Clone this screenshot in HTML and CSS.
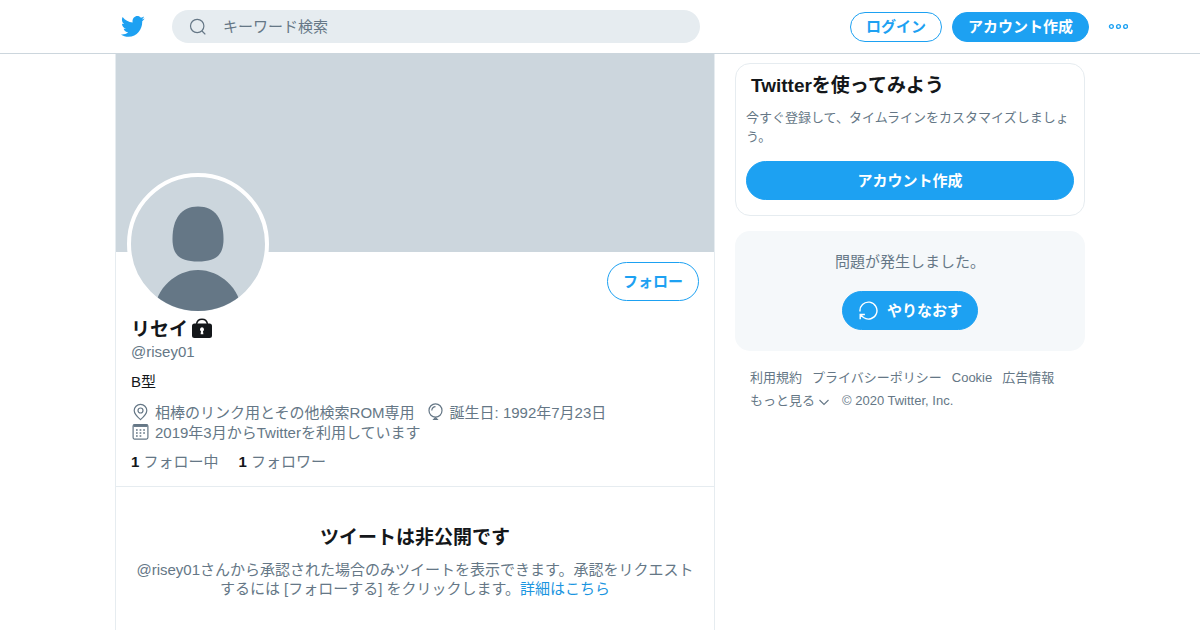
FILE: index.html
```html
<!DOCTYPE html>
<html lang="ja">
<head>
    <meta charset="UTF-8">
    <meta name="viewport" content="width=device-width, initial-scale=1.0">
    <title>リセイ (@risey01) / Twitter</title>
    <link rel="stylesheet" href="styles.css">
</head>
<body>
    <header class="topbar">
        <a class="logo" href="#">
            <svg viewBox="0 0 24 24" preserveAspectRatio="none"><path d="M23.643 4.937c-.835.37-1.732.62-2.675.733.962-.576 1.7-1.49 2.048-2.578-.9.534-1.897.922-2.958 1.13-.85-.904-2.06-1.47-3.4-1.47-2.572 0-4.658 2.086-4.658 4.66 0 .364.042.718.12 1.06-3.873-.195-7.304-2.05-9.602-4.868-.4.69-.63 1.49-.63 2.342 0 1.616.823 3.043 2.072 3.878-.764-.025-1.482-.234-2.11-.583v.06c0 2.257 1.605 4.14 3.737 4.568-.392.106-.803.162-1.227.162-.3 0-.593-.028-.877-.082.593 1.85 2.313 3.198 4.352 3.234-1.595 1.25-3.604 1.995-5.786 1.995-.376 0-.747-.022-1.112-.065 2.062 1.323 4.51 2.093 7.14 2.093 8.57 0 13.255-7.098 13.255-13.254 0-.2-.005-.402-.014-.602.91-.658 1.7-1.477 2.323-2.41z"/></svg>
        </a>
        <div class="search">
            <svg class="line" viewBox="0 0 20 20"><circle cx="9.2" cy="9" r="6.7"/><path d="M14 14l3.3 3.4"/></svg>
            <span>キーワード検索</span>
        </div>
        <nav class="account">
            <a class="btn outline" href="#">ログイン</a>
            <a class="btn fill" href="#">アカウント作成</a>
            <svg class="dots" viewBox="0 0 20 8"><circle cx="3.4" cy="3.5" r="1.9"/><circle cx="10.5" cy="3.5" r="1.9"/><circle cx="17.6" cy="3.5" r="1.9"/></svg>
        </nav>
    </header>

    <div class="layout">
        <main class="profile">
            <div class="banner"></div>
            <div class="info">
                <div class="actions">
                    <div class="avatar">
                        <svg viewBox="0 0 134 134"><path d="M67 29.5C84 29.5 92.5 42 92.5 62C92.5 79 84 84.5 67 84.5C50 84.5 41.5 79 41.5 62C41.5 42 50 29.5 67 29.5z"/><path d="M24 134C24 112 45 93 67 93S110 112 110 134z"/></svg>
                    </div>
                    <a class="btn outline big" href="#">フォロー</a>
                </div>
                <h1>リセイ<svg class="lock" viewBox="0 0 20 21"><path d="M4.5 7a5.6 6 0 0 1 11 0" fill="none" stroke="#14171a" stroke-width="1.5"/><path fill-rule="evenodd" d="M2.5 6.5h15A2.5 2.5 0 0 1 20 9v9.5a2.5 2.5 0 0 1-2.5 2.5h-15A2.5 2.5 0 0 1 0 18.5V9a2.5 2.5 0 0 1 2.5-2.5zM10 10.3a2.1 2.1 0 0 0-1 3.9l-.4 3h2.8l-.4-3a2.1 2.1 0 0 0-1-3.9z"/></svg></h1>
                <div class="handle">@risey01</div>
                <p class="bio">B型</p>
                <div class="meta">
                    <span><svg class="line" viewBox="0 0 20 20"><path d="M9.5 17.6C7.3 15.8 3.2 12.3 3.2 8.6a6.3 6.2 0 0 1 12.6 0C15.8 12.3 11.7 15.8 9.5 17.6z"/><circle cx="9.5" cy="8.5" r="2.5"/></svg>相棒のリンク用とその他検索ROM専用</span>
                    <span><svg class="line" viewBox="0 0 20 20"><ellipse cx="9.5" cy="8.5" rx="6.5" ry="6.7"/><path d="M5.8 8.5A3.7 3.9 0 0 1 9.5 4.6M7.8 17.3L9.5 15.5l1.7 1.8z"/></svg>誕生日: 1992年7月23日</span>
                    <span><svg class="line" viewBox="0 0 20 20"><rect x="2.1" y="2.5" width="14.8" height="14.6" rx="1.5"/><path stroke-width="2.5" d="M2.5 3.7h14"/><path class="days" d="M5 8h10M5 11h10M5 14h6"/></svg>2019年3月からTwitterを利用しています</span>
                </div>
                <div class="counts"><span><b>1</b> フォロー中</span><span><b>1</b> フォロワー</span></div>
            </div>
            <section class="protected">
                <h2>ツイートは非公開です</h2>
                <p>@risey01さんから承認された場合のみツイートを表示できます。承認をリクエストするには [フォローする] をクリックします。<a href="#">詳細はこちら</a></p>
            </section>
        </main>

        <aside class="sidebar">
            <section class="signup">
                <h2>Twitterを使ってみよう</h2>
                <p>今すぐ登録して、タイムラインをカスタマイズしましょう。</p>
                <a class="btn fill big" href="#">アカウント作成</a>
            </section>
            <section class="error">
                <p>問題が発生しました。</p>
                <a class="btn fill big" href="#"><svg viewBox="0 0 20 20"><path d="M2 10.500A8.500 8.500 0 1 1 5.500 16.500L2.500 13.800M2.200 18.200V13.500h4.700"/></svg>やりなおす</a>
            </section>
            <footer>
                <a href="#">利用規約</a>
                <a href="#">プライバシーポリシー</a>
                <a href="#">Cookie</a>
                <a href="#">広告情報</a>
                <a href="#">もっと見る<svg viewBox="0 0 12 12"><path d="M1.5 4L6 8.5 10.5 4"/></svg></a>
                <span>© 2020 Twitter, Inc.</span>
            </footer>
        </aside>
    </div>
</body>
</html>
```
FILE: styles.css
```css
* {
    box-sizing: border-box;
}
body {
    margin: 0;
    height: 630px;
    overflow: hidden;
    background-color: #fff;
    color: #14171a;
    font-family: "Liberation Sans", "Noto Sans CJK JP", sans-serif;
    font-size: 15px;
    line-height: 20px;
}
h1, h2, p {
    margin: 0;
}
h1, h2 {
    font-size: 19px;
    line-height: 25px;
}
a {
    color: inherit;
    text-decoration: none;
}
svg {
    display: block;
    flex-shrink: 0;
}
.line {
    width: 20px;
    height: 20px;
    fill: none;
    stroke: #657786;
    stroke-width: 1.2;
}
.topbar {
    display: flex;
    align-items: center;
    height: 54px;
    padding: 0 72px 0 120px;
    border-bottom: 1px solid #ccd6dd;
}
.logo svg {
    width: 25px;
    height: 27px;
    fill: #1da1f2;
}
.search {
    display: flex;
    align-items: center;
    gap: 15px;
    width: 528px;
    height: 33px;
    margin-left: 27px;
    padding: 1px 0 0 16px;
    border-radius: 17px;
    background-color: #e6ecf0;
    color: #657786;
}
.account {
    display: flex;
    align-items: center;
    gap: 10px;
    margin-left: auto;
}
.btn {
    display: flex;
    align-items: center;
    justify-content: center;
    height: 30px;
    padding: 0 15px;
    border: 1px solid #1da1f2;
    border-radius: 20px;
    font-weight: bold;
}
.btn.big {
    height: 39px;
}
.outline {
    color: #1da1f2;
}
.fill {
    background-color: #1da1f2;
    color: #fff;
}
.dots {
    width: 20px;
    height: 8px;
    margin-left: 9px;
    fill: none;
    stroke: #1da1f2;
    stroke-width: 1.4;
}
.layout {
    display: flex;
    gap: 20px;
    padding-left: 115px;
}
.profile {
    width: 600px;
    height: 600px;
    border: solid #e6ecf0;
    border-width: 0 1px;
}
.banner {
    height: 198px;
    background-color: #ccd6dd;
}
.info {
    height: 235px;
    padding: 10px 15px 0;
    border-bottom: 1px solid #e6ecf0;
}
.actions {
    display: flex;
    justify-content: space-between;
    height: 55px;
}
.avatar {
    width: 142px;
    height: 142px;
    margin: -89px 0 0 -4px;
    border: 4px solid #fff;
    border-radius: 50%;
    background-color: #ccd6dd;
    overflow: hidden;
}
.avatar svg {
    fill: #657786;
}
h1 {
    display: flex;
    align-items: center;
    gap: 4px;
}
.lock {
    width: 20px;
    height: 21px;
    margin-top: -4px;
    fill: #14171a;
}
.handle, .meta, .counts {
    color: #657786;
}
.bio {
    margin-top: 10px;
}
.meta {
    display: flex;
    flex-wrap: wrap;
    column-gap: 11px;
    margin-top: 11px;
}
.meta span {
    display: flex;
    gap: 4px;
}
.meta .line {
    margin-top: -1px;
}
.days {
    stroke-width: 1.5;
    stroke-dasharray: 1.7 1.9;
}
.counts {
    display: flex;
    gap: 20px;
    margin-top: 9px;
}
.counts b {
    color: #14171a;
}
.protected {
    padding: 38px 15px;
    text-align: center;
}
.protected p {
    margin-top: 10px;
    color: #657786;
    line-height: 19px;
}
.protected a {
    color: #1b95e0;
}
.sidebar {
    width: 350px;
    padding-top: 9px;
}
.signup {
    height: 153px;
    padding: 9px 10px;
    border: 1px solid #e6ecf0;
    border-radius: 15px;
}
.signup h2 {
    padding-left: 5px;
}
.signup p {
    margin: 10px 0 15px;
    color: #657786;
    font-size: 13px;
    line-height: 19px;
}
.error {
    display: flex;
    flex-direction: column;
    align-items: center;
    gap: 19px;
    height: 120px;
    margin-top: 15px;
    padding-top: 21px;
    border-radius: 15px;
    background-color: #f5f8fa;
    color: #657786;
}
.error svg {
    width: 20px;
    height: 20px;
    margin-right: 9px;
    fill: none;
    stroke: #fff;
    stroke-width: 1.4;
}
footer {
    display: flex;
    flex-wrap: wrap;
    gap: 3px 10px;
    padding: 17px 15px;
    color: #657786;
    font-size: 13px;
}
footer a {
    display: flex;
    align-items: center;
}
footer svg {
    width: 12px;
    height: 12px;
    margin: 2px 2px 0 3px;
    fill: none;
    stroke: #657786;
    stroke-width: 1.1;
}
```
